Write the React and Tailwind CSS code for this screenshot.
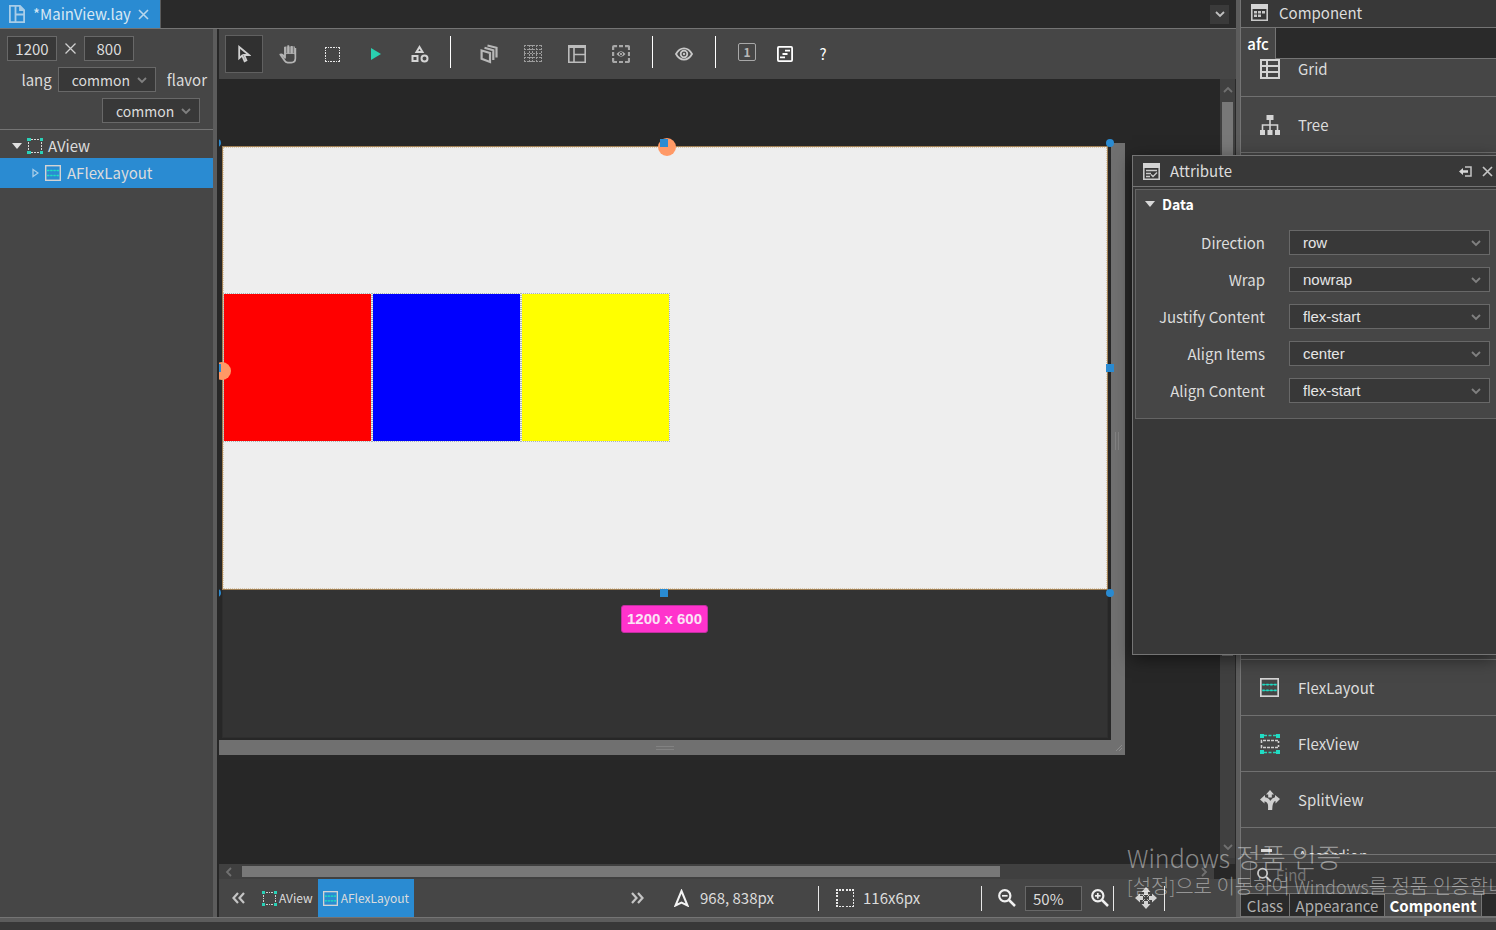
import React from "react";

function ViewIcon({ size = 16 }) {
  return (
    <svg width={size} height={size} viewBox="0 0 16 16" shapeRendering="crispEdges" fill="none">
      <path d="M4 1.500H12M4 14.500H12M1.500 4V12M14.500 4V12" stroke="#d8d8d8" strokeDasharray="2 1" />
      <path d="M0 0h3.500v3H0zM12.500 0h3.500v3h-3.500zM0 13h3.500v3H0zM12.500 13h3.500v3h-3.500z" fill="#2ad1b8" />
    </svg>
  );
}

function FlexLayoutIcon({ size = 16, fill = "none" }) {
  return (
    <svg width={size} height={size} viewBox="0 0 16 16" fill="none">
      <rect x="0.700" y="0.700" width="14.600" height="14.600" stroke="#d4d4d4" strokeWidth="1.400" fill={fill} />
      <path d="M2 5.500H14M2 10.500H14" stroke="#1fcfb8" strokeWidth="0.700" />
      <path d="M2 5.500H14M2 10.500H14" stroke="#1fdcc4" strokeWidth="1.500" strokeDasharray="2 1.300" />
    </svg>
  );
}

function FlexViewIcon() {
  return (
    <svg width="20" height="20" viewBox="0 0 20 20" fill="none">
      <path d="M4 1.500H16M4 18.500H16" stroke="#2ad1b8" strokeWidth="1.400" strokeDasharray="3 1.500" />
      <path d="M1.500 9V6.500H18.500V9M1.500 11V13.500H18.500V11" stroke="#d0d0d0" strokeWidth="1.600" strokeDasharray="3 1" />
      <path d="M0 0h4v4H0zM16 0H20v4h-4zM0 16h4v4H0zM16 16H20v4h-4z" fill="#20dcc4" />
    </svg>
  );
}

function DashedBox({ size }) {
  return (
    <svg width={size} height={size} viewBox="0 0 18 18" shapeRendering="crispEdges" fill="none">
      <path d="M0 .75H18M0 17.250H18M.75 0V18M17.250 0V18" stroke="#e8e8e8" strokeWidth="1.500" strokeDasharray="2 1.200" />
    </svg>
  );
}

function Chevron({ dir = "down", color = "#8a8a8a", size = 10 }) {
  const d = {
    down: "M1 3l4 4 4-4",
    up: "M1 7l4-4 4 4",
    left: "M7 1L3 5l4 4",
    right: "M3 1l4 4-4 4",
  }[dir];
  return (
    <svg width={size} height={size} viewBox="0 0 10 10" fill="none" stroke={color} strokeWidth="1.800">
      <path d={d} />
    </svg>
  );
}

function PointerIcon() {
  return (
    <svg width="14" height="18" viewBox="0 0 14 18" fill="none" stroke="#d0d0d0" strokeWidth="1.800">
      <path d="M2.200 2V13.200L5.200 10.600L7.600 16.200L9.400 15.300L7.200 10H12Z" strokeLinejoin="miter" />
    </svg>
  );
}

function HandIcon() {
  return (
    <svg width="18" height="20" viewBox="0 0 18 20" fill="none">
      <path d="M5.500 2.500h10.500v8h-10.500z" fill="#a0a0a0" />
      <path d="M7.700 2v7M11 2v7M14.300 3v6" stroke="#5a5a5a" strokeWidth="0.700" />
      <path d="M6 11.500V3M9.300 9.500V1.300M12.700 9.500V2M16.300 4v10.500c0 2.600-1.500 4-4 4H8.500c-1.600 0-2.300-.8-3-2L1.300 10.500c1.600-.5 2.600.2 3.400 1.400l1.300 1.800V10" stroke="#b4b4b4" strokeWidth="1.800" strokeLinejoin="round" />
      <path d="M7.200 10h8v4.500c0 2-1 3-3.200 3H8.600L7.200 15z" fill="#464646" />
    </svg>
  );
}

function ShapesIcon() {
  return (
    <svg width="18" height="18" viewBox="0 0 18 18" fill="none" stroke="#d4d4d4" strokeWidth="2">
      <path d="M8.500 2L11.500 7H5.500Z" />
      <path d="M1.500 11H6.500V16H1.500Z" />
      <circle cx="13.500" cy="13.500" r="3" />
    </svg>
  );
}

function LayersIcon() {
  return (
    <svg width="18" height="20" viewBox="0 0 18 20" fill="none" stroke="#b8b8b8" strokeWidth="2.200">
      <path d="M1.600 6.500L10 9V18L1.600 14.800Z" />
      <path d="M4.500 3.800L13.300 6.300V16M7.500 1.500L16.500 3.800V13.500" />
    </svg>
  );
}

function GridDotsIcon() {
  return (
    <svg width="18" height="18" viewBox="0 0 18 18" fill="none" stroke="#9c9c9c" strokeDasharray="2 1" shapeRendering="crispEdges">
      <path d="M0 .5H18M0 4.500H18M0 8.500H18M0 12.500H18M0 16.500H18M.5 0V18M5.500 0V18M8.500 0V18M12.500 0V18M17.500 0V18" />
    </svg>
  );
}

function PanelIcon() {
  return (
    <svg width="18" height="18" viewBox="0 0 18 18" fill="none" stroke="#bcbcbc" strokeWidth="1.600">
      <path d="M.8.8H17.200V17.200H.8ZM.8 2.200H17.200M6 3V17.200M6 9.500H17.200" />
    </svg>
  );
}

function FocusIcon() {
  return (
    <svg width="18" height="18" viewBox="0 0 18 18" fill="none" stroke="#a8a8a8" strokeWidth="2.200">
      <path d="M1.100 5V2.100q0-1 1-1h3M13 1.100h3q1 0 1 1v3M17 13v3q0 1-1 1h-3M5 17H2.100q-1 0-1-1v-3M7 1.100h4M7 17h4M1.100 7v4M17 7v4" />
      <path d="M4.500 9Q9 3.500 13.500 9Q9 14.500 4.500 9Z" fill="#b0b0b0" stroke="none" />
      <circle cx="9" cy="9" r="1.600" stroke="#464646" strokeWidth="1" />
    </svg>
  );
}

function EyeIcon() {
  return (
    <svg width="18" height="14" viewBox="0 0 18 14" fill="none" stroke="#c8c8c8" strokeWidth="1.800">
      <path d="M1 7Q4 1.400 9 1.400T17 7Q14 12.600 9 12.600T1 7Z" />
      <circle cx="9" cy="7" r="3.300" />
      <circle cx="9" cy="7" r="1.200" fill="#c4c4c4" stroke="none" />
    </svg>
  );
}

function FormatIcon() {
  return (
    <svg width="16" height="16" viewBox="0 0 16 16" fill="none" stroke="#fff" strokeWidth="1.800">
      <rect x=".9" y=".9" width="14.200" height="14.200" rx="1" />
      <path d="M8 4.600h5M5.500 8h5M3 11.400h5" />
    </svg>
  );
}

function ComponentIcon() {
  return (
    <svg width="17" height="17" viewBox="0 0 17 17" fill="none">
      <path d="M.8.8H16.200V16.200H.8Z" stroke="#c8c8c8" strokeWidth="1.600" />
      <path d="M0 0h17v5H0z" fill="#d4d4d4" />
      <path d="M3 7h3v2.500H3zM7 7h3v2.500H7zM11 7h3v2.500h-3zM3 10.500h3V13H3zM7 10.500h3V13H7z" fill="#c8c8c8" />
    </svg>
  );
}

function AttributeIcon() {
  return (
    <svg width="17" height="17" viewBox="0 0 17 17" fill="none" stroke="#c8c8c8">
      <path d="M.8.8H16.200V16.200H.8Z" strokeWidth="1.600" />
      <path d="M0 0h17v5H0z" fill="#d4d4d4" stroke="none" />
      <path d="M3 7.500h11M3 10.500h5M3 13.500h4M8 11.500l2 2 4-4" strokeWidth="1.400" />
    </svg>
  );
}

function GridIcon() {
  return (
    <svg width="20" height="20" viewBox="0 0 20 20" fill="none" stroke="#d4d4d4" strokeWidth="2">
      <path d="M1 1H19V19H1ZM1 7H19M1 13H19M7 1V19" />
    </svg>
  );
}

function TreeIcon() {
  return (
    <svg width="20" height="20" viewBox="0 0 20 20">
      <path d="M6.500 0h7v5h-7zM0 15h5v5H0zM7.500 15h5v5h-5zM15 15h5v5h-5z" fill="#d4d4d4" />
      <path d="M10 4V16M2.500 16V10H17.500V16" fill="none" stroke="#d4d4d4" strokeWidth="1.600" />
    </svg>
  );
}

function SplitIcon() {
  return (
    <svg width="20" height="20" viewBox="0 0 20 20">
      <path d="M10 0L14 4.500H11.800V7.500H8.200V4.500H6Z" fill="#d0d0d0" />
      <path d="M0 9.500L5 5V7.300Q9 8 10.200 11Q12 7.800 15 7.300V5L20 9L15.500 13.500V10.800Q12.200 12 12.200 20H8Q8.300 16 7.800 14Q7 11.800 4.500 11.300V13.500Z" fill="#d0d0d0" />
    </svg>
  );
}

function MoveIcon() {
  return (
    <svg width="22" height="22" viewBox="0 0 22 22" fill="#d4d4d4">
      <path d="M11 0L15.500 5H13v3H9V5H6.500ZM11 22L6.500 17H9v-3h4v3h2.500ZM0 11L5 6.500V9h3v4H5v2.500ZM22 11L17 15.500V13h-3V9h3V6.500Z" />
      <path d="M7.500 7.500l7 7M14.500 7.500l-7 7" stroke="#d4d4d4" />
      <path d="M9.500 9.500h3v3h-3z" fill="#464646" />
    </svg>
  );
}

function MagnifierIcon({ sign, color = "#f0f0f0", size = 18 }) {
  return (
    <svg width={size} height={size} viewBox="0 0 18 18" fill="none" stroke={color}>
      <circle cx="6.800" cy="6.800" r="5.600" strokeWidth="2.200" />
      <path d="M11 11L17 17" strokeWidth="2.500" />
      {sign && <path d="M4 6.800H9.600" strokeWidth="1.700" />}
      {sign === "plus" && <path d="M6.800 4V9.600" strokeWidth="1.700" />}
    </svg>
  );
}

function DoubleChevron({ flip }) {
  return (
    <svg width="13" height="12" viewBox="0 0 13 12" fill="none" stroke="#c4c4c4" strokeWidth="2.200">
      <path d={flip ? "M1 1L5.500 6L1 11M7 1L11.500 6L7 11" : "M6 1L1.500 6L6 11M12 1L7.500 6L12 11"} />
    </svg>
  );
}

function ToolButton({ label, active, children }) {
  return (
    <button
      type="button"
      aria-label={label}
      className={
        active
          ? "flex h-[38px] w-[38px] items-center justify-center border border-[#606060] bg-[#303030]"
          : "flex h-[38px] w-[38px] items-center justify-center"
      }
    >
      {children}
    </button>
  );
}

function Select({ id, value, className, textClass }) {
  return (
    <span className={"relative inline-flex h-[25px] items-center border border-[#686868] bg-[#383838] " + className}>
      <select id={id} defaultValue={value} className={"h-full w-full appearance-none bg-transparent pl-[13px] outline-none " + textClass}>
        <option>{value}</option>
      </select>
      <span className="pointer-events-none absolute right-2 flex">
        <Chevron color="#808080" />
      </span>
    </span>
  );
}

function ComponentRow({ icon, name }) {
  return (
    <div className="flex h-14 shrink-0 items-center gap-[18px] border-b border-[#707070] pl-[19px]">
      <span className="flex w-5">{icon}</span>
      <span>{name}</span>
    </div>
  );
}

const attributes = [
  ["Direction", "row"],
  ["Wrap", "nowrap"],
  ["Justify Content", "flex-start"],
  ["Align Items", "center"],
  ["Align Content", "flex-start"],
];

function AttributeWindow() {
  return (
    <section className="absolute top-[155px] right-0 flex h-[500px] w-[364px] flex-col border-y border-l border-[#747474] bg-[#383838] shadow-[0_4px_16px_rgba(0,0,0,0.5)]">
      <header className="flex h-[31px] items-center border-b border-[#747474] pr-[3px] pl-[10px]">
        <AttributeIcon />
        <h2 className="ml-[10px] flex-1">Attribute</h2>
        <button type="button" aria-label="Dock" className="mr-[10px]">
          <svg width="13" height="11" viewBox="0 0 13 11" fill="none" stroke="#c4c4c4">
            <path d="M6 1H12V10H6" strokeWidth="1.500" />
            <path d="M0 5.500L4 2V4.200H9V6.800H4V9Z" fill="#d8d8d8" stroke="none" />
          </svg>
        </button>
        <button type="button" aria-label="Close">
          <svg width="11" height="11" viewBox="0 0 11 11" stroke="#c4c4c4" strokeWidth="1.700">
            <path d="M1 1L10 10M10 1L1 10" />
          </svg>
        </button>
      </header>
      <div className="mt-[2px] ml-[2px] border-y border-l border-[#646464] bg-[#464646] pb-[15px]">
        <h3 className="flex h-[27px] items-center gap-[7px] pl-[9px] font-bold text-white">
          <svg width="10" height="6" viewBox="0 0 10 6" fill="#d8d8d8">
            <path d="M0 0H10L5 6Z" />
          </svg>
          <span className="text-[14px]">Data</span>
        </h3>
        <div className="mt-[13px] flex flex-col gap-3 pr-[6px]">
          {attributes.map(([label, value]) => (
            <div key={label} className="flex h-[25px] items-center justify-end gap-6">
              <label htmlFor={label}>{label}</label>
              <Select id={label} value={value} className="w-[201px]" textClass="font-['Liberation_Sans',sans-serif] text-[15px] text-[#e6e6e6]" />
            </div>
          ))}
        </div>
      </div>
    </section>
  );
}

function Canvas() {
  return (
    <div className="relative min-w-0 flex-1 overflow-hidden bg-[#272727]">
      <div className="absolute top-[64px] left-0 h-[612px] w-[906px] border-r-[14px] border-b-[15px] border-[#707070]">
        <div className="absolute top-[4px] left-[3px] h-[591px] w-[886px] border border-[#2e2e2e] bg-[#333333]" />
        <div className="absolute top-[3px] left-[3px] flex h-[444px] w-[886px] items-center border border-[#a08055] bg-[#eeeeee] pb-[2px]">
          <div className="absolute inset-0 border border-dotted border-[#d8c8b0]" />
          <div className="relative h-[149px] w-[149px] border border-dotted border-[#a8b4b8] bg-[#ff0000] bg-clip-padding" />
          <div className="relative h-[149px] w-[149px] border border-dotted border-[#a8b4b8] bg-[#0000ff] bg-clip-padding" />
          <div className="relative h-[149px] w-[149px] border border-dotted border-[#a8b4b8] bg-[#ffff00] bg-clip-padding" />
        </div>
        <div className="absolute top-[-5px] left-[439px] h-[18px] w-[18px] rounded-full bg-[#ff9966]" />
        <div className="absolute top-[219px] left-[-6px] h-[18px] w-[18px] rounded-full bg-[#ff9966]" />
        <div className="absolute top-[-4px] left-[441px] h-2 w-2 bg-[#2a8bd2]" />
        <div className="absolute top-[221px] left-[-6px] h-2 w-2 bg-[#2a8bd2]" />
        <div className="absolute top-[221px] left-[887px] h-2 w-2 bg-[#2a8bd2]" />
        <div className="absolute top-[446px] left-[441px] h-2 w-2 bg-[#2a8bd2]" />
        <div className="absolute top-[-4px] left-[-6px] h-2 w-2 rounded-full bg-[#2a8bd2]" />
        <div className="absolute top-[446px] left-[-6px] h-2 w-2 rounded-full bg-[#2a8bd2]" />
        <div className="absolute top-[-4px] left-[887px] h-2 w-2 rounded-full bg-[#2a8bd2]" />
        <div className="absolute top-[446px] left-[887px] h-2 w-2 rounded-full bg-[#2a8bd2]" />
        <div className="absolute top-[462px] left-[402px] flex h-[28px] w-[87px] items-center justify-center rounded-[3px] border border-[#c030a0] bg-[#ff33cc] font-['Liberation_Sans',sans-serif] text-[15px] font-bold text-[#fbe4f6]">
          1200 x 600
        </div>
        <div className="absolute bottom-[-10px] left-[437px] h-1 w-[18px] border-y border-[#828282]" />
        <div className="absolute top-[289px] right-[-8px] h-[18px] w-1 border-x border-[#828282]" />
        <svg className="absolute right-[-12px] bottom-[-12px]" width="8" height="8" viewBox="0 0 8 8" stroke="#8a8a8a">
          <path d="M1 7L7 1M4 7L7 4" />
        </svg>
      </div>
    </div>
  );
}

export default function App() {
  return (
    <div className="relative flex h-screen flex-col overflow-hidden bg-[#3a3a3a] font-['Noto_Sans_CJK_KR',sans-serif] text-[15px] leading-5 text-[#dcdcdc]">
      <div className="flex min-h-0 flex-1">
        <div className="flex min-w-0 flex-1 flex-col">
          <div className="flex h-[29px] items-center justify-between border-b border-[#747474] bg-[#2a2a2a] pr-[7px]">
            <div className="flex h-full items-center border-r border-[#5c5c5c] bg-[#2a8bd2] pr-[11px] pl-[9px]">
              <svg width="16" height="18" viewBox="0 0 16 18" fill="none" stroke="#a8cde8" strokeWidth="1.800">
                <path d="M.9.9H11L15.100 5V17.100H.9ZM6.500.9V17.100M6.500 9.500H15.100M11 .9V5H15.100" />
              </svg>
              <span className="ml-[8px] text-[#d8e8f4]">*MainView.lay</span>
              <button type="button" aria-label="Close tab" className="ml-[7px]">
                <svg width="11" height="11" viewBox="0 0 11 11" stroke="#b8d6ec" strokeWidth="1.600">
                  <path d="M1 1L10 10M10 1L1 10" />
                </svg>
              </button>
            </div>
            <button type="button" aria-label="Open tabs" className="flex h-[19px] w-[19px] items-center justify-center bg-[#3a3a3a]">
              <Chevron color="#c0c0c0" />
            </button>
          </div>

          <div className="flex min-h-0 flex-1">
            <aside className="flex w-[213px] shrink-0 flex-col bg-[#464646]">
              <div className="flex flex-col gap-[6px] border-b border-[#747474] pt-[7px] pb-[6px]">
                <div className="flex items-center pl-[7px]">
                  <input aria-label="Width" defaultValue="1200" className="h-[25px] w-[50px] border border-[#686868] bg-[#383838] text-center" />
                  <svg className="mx-[8px]" width="11" height="11" viewBox="0 0 11 11" stroke="#d0d0d0" strokeWidth="1.300">
                    <path d="M.5.5L10.500 10.500M10.500.5L.5 10.500" />
                  </svg>
                  <input aria-label="Height" defaultValue="800" className="h-[25px] w-[50px] border border-[#686868] bg-[#383838] text-center" />
                </div>
                <div className="flex items-center justify-end pr-[6px]">
                  <label htmlFor="lang" className="mr-[6px]">lang</label>
                  <Select id="lang" value="common" className="w-[98px]" textClass="text-[14px]" />
                  <label htmlFor="flavor" className="ml-[11px]">flavor</label>
                </div>
                <div className="flex justify-end pr-[13px]">
                  <Select id="flavor" value="common" className="w-[98px]" textClass="text-[14px]" />
                </div>
              </div>
              <ul>
                <li className="flex h-7 items-center pt-1 pl-3">
                  <svg width="10" height="6" viewBox="0 0 10 6" fill="#e0e0e0"><path d="M0 0H10L5 6Z" /></svg>
                  <span className="mr-[5px] ml-[5px]"><ViewIcon /></span>
                  AView
                </li>
                <li className="flex h-[30px] items-center bg-[#2a8bd2] pl-8">
                  <svg width="7" height="10" viewBox="0 0 7 10" fill="none" stroke="#a8cde8" strokeWidth="1.300"><path d="M1 1.500V8.500L6 5Z" /></svg>
                  <span className="mr-[6px] ml-[6px]"><FlexLayoutIcon /></span>
                  AFlexLayout
                </li>
              </ul>
            </aside>
            <div className="w-1 shrink-0 bg-[#5c5c5c]" />
            <div className="w-[2px] shrink-0 bg-[#272727]" />

            <main className="flex min-w-0 flex-1 flex-col">
              <div className="flex h-[50px] items-center gap-[6px] bg-[#464646] pl-[6px]">
                <ToolButton label="Select" active><PointerIcon /></ToolButton>
                <ToolButton label="Hand"><HandIcon /></ToolButton>
                <ToolButton label="Area"><DashedBox size={15} /></ToolButton>
                <ToolButton label="Run">
                  <svg width="10" height="12" viewBox="0 0 10 12" fill="#2ad1b0"><path d="M0 0L10 6L0 12Z" /></svg>
                </ToolButton>
                <ToolButton label="Shapes"><ShapesIcon /></ToolButton>
                <span className="mr-[13px] ml-[5px] mb-1 h-8 w-px bg-white" />
                <ToolButton label="Layers"><LayersIcon /></ToolButton>
                <ToolButton label="Grid lines"><GridDotsIcon /></ToolButton>
                <ToolButton label="Panels"><PanelIcon /></ToolButton>
                <ToolButton label="Focus"><FocusIcon /></ToolButton>
                <span className="mx-[6px] mb-1 h-8 w-px bg-white" />
                <ToolButton label="Preview"><EyeIcon /></ToolButton>
                <span className="mx-[6px] mb-1 h-8 w-px bg-white" />
                <div className="flex">
                  <ToolButton label="One">
                    <span className="mb-1 flex h-[18px] w-[18px] items-center justify-center rounded-[2px] border border-[#a8a8a8] text-[12px] font-bold text-[#b8b8b8]">1</span>
                  </ToolButton>
                  <ToolButton label="Format"><FormatIcon /></ToolButton>
                  <ToolButton label="Help"><span className="text-white">?</span></ToolButton>
                </div>
              </div>

              <div className="flex min-h-0 flex-1">
                <Canvas />
                <div className="mb-[6px] flex w-[15px] shrink-0 flex-col items-center bg-[#404040] py-[6px]">
                  <Chevron dir="up" color="#707070" />
                  <div className="mt-[7px] h-[554px] w-[11px] bg-[#787878]" />
                  <div className="mt-auto"><Chevron color="#707070" /></div>
                </div>
                <div className="w-px shrink-0 bg-[#2a2a2a]" />
              </div>
              <div className="flex h-[15px] bg-[#272727] pr-[22px]">
                <div className="flex flex-1 items-center bg-[#404040] px-[5px]">
                  <Chevron dir="left" color="#707070" />
                  <div className="ml-2 h-[11px] w-[758px] bg-[#787878]" />
                  <div className="ml-auto"><Chevron dir="right" color="#707070" /></div>
                </div>
              </div>

              <div className="flex h-[38px] items-center bg-[#464646] pl-[13px]">
                <button type="button" aria-label="Previous"><DoubleChevron /></button>
                <button type="button" className="ml-[17px] flex h-full items-center gap-[2px] text-[12px]">
                  <ViewIcon size={15} />AView
                </button>
                <button type="button" className="ml-[5px] flex h-full items-center gap-[3px] bg-[#2a8bd2] px-[5px] text-[12px]">
                  <FlexLayoutIcon size={15} />AFlexLayout
                </button>
                <div className="ml-auto flex h-full items-center">
                  <button type="button" aria-label="Next"><DoubleChevron flip /></button>
                  <svg className="ml-[30px]" width="15" height="18" viewBox="0 0 15 18" fill="none" stroke="#f4f4f4" strokeWidth="2">
                    <path d="M7.500 2L13.500 16.500L7.500 13.500L1.500 16.500Z" />
                  </svg>
                  <span className="ml-[11px] w-[118px]">968, 838px</span>
                  <span className="h-[25px] w-px bg-[#e8e8e8]" />
                  <span className="ml-[17px]"><DashedBox size={18} /></span>
                  <span className="ml-[9px] w-[118px]">116x6px</span>
                  <span className="h-[25px] w-px bg-[#e8e8e8]" />
                  <button type="button" aria-label="Zoom out" className="ml-4"><MagnifierIcon sign="minus" /></button>
                  <input aria-label="Zoom level" defaultValue="50%" className="ml-[9px] h-[25px] w-[57px] border border-[#686868] bg-[#383838] pl-[7px]" />
                  <button type="button" aria-label="Zoom in" className="ml-[9px]"><MagnifierIcon sign="plus" /></button>
                  <span className="ml-[4px] h-[25px] w-px bg-[#e8e8e8]" />
                  <button type="button" aria-label="Move" className="mr-[7px] ml-[21px]"><MoveIcon /></button>
                  <span className="mr-[71px] h-[25px] w-px bg-[#e8e8e8]" />
                </div>
              </div>
            </main>
          </div>
        </div>

        <div className="w-1 shrink-0 bg-[#5c5c5c]" />
        <aside className="flex w-[256px] shrink-0 flex-col border-l border-[#747474] bg-[#464646]">
          <header className="flex h-[28px] items-center gap-[11px] border-b border-[#747474] bg-[#383838] pb-[2px] pl-[10px]">
            <ComponentIcon />
            <h2>Component</h2>
          </header>
          <div className="flex h-[31px]">
            <button type="button" className="w-[35px] border-r border-[#747474] font-medium text-white">afc</button>
            <div className="flex-1 border-b border-[#747474] bg-[#2a2a2a]" />
          </div>
          <div className="flex min-h-0 flex-1 flex-col justify-between overflow-hidden border-b border-[#747474]">
            <div className="-mt-[18px]">
              <ComponentRow icon={<GridIcon />} name="Grid" />
              <ComponentRow icon={<TreeIcon />} name="Tree" />
            </div>
            <div className="border-t border-[#707070]">
              <ComponentRow icon={<FlexLayoutIcon size={19} />} name="FlexLayout" />
              <ComponentRow icon={<FlexViewIcon />} name="FlexView" />
              <ComponentRow icon={<SplitIcon />} name="SplitView" />
              <div className="h-[26px] overflow-hidden">
                <ComponentRow
                  icon={<svg width="20" height="14" viewBox="0 0 20 14" fill="#d8d8d8"><path d="M1 0H12V3H1ZM0 6H20V9H0Z" /></svg>}
                  name="Accordion"
                />
              </div>
            </div>
          </div>
          <div className="mt-[7px] mb-[6px] ml-[9px] flex h-[25px] items-center border-y border-l border-[#686868] bg-[#383838] pl-[6px]">
            <MagnifierIcon color="#c8c8c8" size={16} />
            <input aria-label="Find component" placeholder="Find" className="ml-1 w-full bg-transparent outline-none placeholder:text-[#757575]" />
          </div>
          <div className="flex h-6 border-y border-[#747474] bg-[#2a2a2a] text-[#b0b0b0]">
            <button type="button" className="w-[49px] border-r border-[#747474] pt-[2px]">Class</button>
            <button type="button" className="w-[95px] border-r border-[#747474] pt-[2px]">Appearance</button>
            <button type="button" className="w-[97px] border-r border-[#747474] bg-[#464646] pt-[2px] font-bold text-white">Component</button>
          </div>
        </aside>
      </div>
      <div className="h-[5px] shrink-0 border-t border-[#747474] bg-[#5c5c5c]" />
      <div className="h-2 shrink-0 bg-[#383838]" />

      <AttributeWindow />
      <div className="pointer-events-none absolute right-0 bottom-[30px] w-[369px] overflow-hidden whitespace-nowrap text-white/45">
        <p className="text-[27px] leading-[30px] font-light"><span className="text-[25px]">Windows</span> 정품 인증</p>
        <p className="text-[20px] leading-[28px] font-light">
          <span className="text-[18px]">[</span>설정<span className="text-[18px]">]</span>으로 이동하여 <span className="text-[18px]">Windows</span>를 정품 인증합니
        </p>
      </div>
    </div>
  );
}
